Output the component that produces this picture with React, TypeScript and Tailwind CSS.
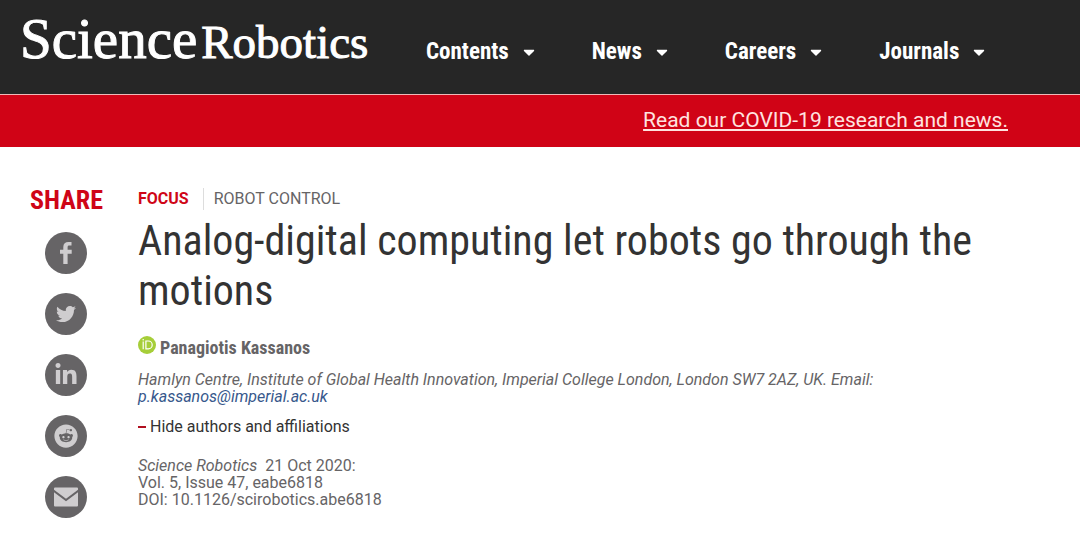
import type { ReactNode } from "react";
import { FaCaretDown, FaLinkedinIn, FaReddit, FaTwitter } from "react-icons/fa";

const menus = ["Contents", "News", "Careers", "Journals"];

function FacebookIcon() {
  return (
    <svg viewBox="0 0 24 24" className="size-6" fill="currentColor" aria-hidden="true">
      <path d="M17.5 1v3.6h-2.1c-1.4 0-1.8.6-1.8 1.7v2.4h4.1v4h-4.1V23H9.3V12.7H6v-4h3.3V5.9C9.300 2.700 11.300 1 14.400 1z" />
    </svg>
  );
}

function EnvelopeIcon() {
  return (
    <svg viewBox="0 0 24 24" className="size-6" fill="currentColor" aria-hidden="true">
      <path d="M1 2.500h22a1 1 0 0 1 1 1v1.300L12 13.700 0 4.800V3.500a1 1 0 0 1 1-1z" />
      <path d="M0 7.300l12 8.900 12-8.900V20.500a1 1 0 0 1-1 1H1a1 1 0 0 1-1-1z" />
    </svg>
  );
}

const shares: { label: string; icon: ReactNode }[] = [
  { label: "Share on Facebook", icon: <FacebookIcon /> },
  { label: "Share on Twitter", icon: <FaTwitter className="size-5" /> },
  { label: "Share on LinkedIn", icon: <FaLinkedinIn className="size-6" /> },
  { label: "Share on Reddit", icon: <FaReddit className="size-6" /> },
  { label: "Share by email", icon: <EnvelopeIcon /> },
];

function SiteHeader() {
  return (
    <header className="flex h-[94px] items-start bg-[#262626] pl-5 text-white">
      <a
        href="#home"
        className="flex w-[406px] shrink-0 items-baseline gap-1 pt-[7px] font-['Liberation_Serif',serif] leading-[64px] whitespace-nowrap [-webkit-text-stroke:1px_white]"
      >
        <span className="text-[57px]">Science</span>
        <span className="text-[47px]">Robotics</span>
      </a>
      <nav className="flex gap-[54px] pt-9 font-['Roboto_Condensed','Liberation_Sans_Narrow',sans-serif] text-[23px] leading-8 font-bold">
        {menus.map((menu) => (
          <button key={menu} type="button" className="flex items-center gap-[11px]">
            {menu}
            <FaCaretDown className="h-[18px] w-[18px]" />
          </button>
        ))}
      </nav>
    </header>
  );
}

function ShareRail() {
  return (
    <aside className="flex w-[138px] shrink-0 flex-col">
      <h2 className="pl-[30px] font-['Roboto_Condensed','Liberation_Sans_Narrow',sans-serif] text-[26px] leading-8 font-bold text-[#cf0517]">
        SHARE
      </h2>
      <ul className="mt-4 flex flex-col gap-[19px] pl-[45px]">
        {shares.map(({ label, icon }) => (
          <li key={label}>
            <button
              type="button"
              aria-label={label}
              className="flex size-[42px] items-center justify-center rounded-full bg-[#666466] text-[#cfcdcf]"
            >
              {icon}
            </button>
          </li>
        ))}
      </ul>
    </aside>
  );
}

function OrcidIcon() {
  return (
    <svg viewBox="0 0 18 18" className="size-[18px]" aria-hidden="true">
      <circle cx="9" cy="9" r="9" fill="#a6ce39" />
      <circle cx="5.2" cy="3.8" r="0.8" fill="#fff" />
      <path d="M5.200 5.500v7.800M7.900 5h2.400a3.900 3.900 0 0 1 0 7.800H7.900z" fill="none" stroke="#fff" strokeWidth="1.2" />
    </svg>
  );
}

function Article() {
  return (
    <article className="min-w-0 flex-1 pr-14 text-[16px] leading-[17px] text-[#666466]">
      <div className="flex items-center pt-1 leading-[22px]">
        <a href="#focus" className="border-r border-[#dddddd] pr-[14px] font-bold text-[#cf0517]">
          FOCUS
        </a>
        <span className="pl-[10px]">ROBOT CONTROL</span>
      </div>
      <h1 className="mt-[6px] font-['Roboto_Condensed','Liberation_Sans_Narrow',sans-serif] text-[42px] leading-[50px] text-[#333333]">
        Analog-digital computing let robots go through the motions
      </h1>
      <div className="mt-5 flex items-start gap-1 font-['Roboto_Condensed','Liberation_Sans_Narrow',sans-serif] text-[18px] leading-6 font-bold">
        <OrcidIcon />
        Panagiotis Kassanos
      </div>
      <address className="mt-[11px] italic">
        Hamlyn Centre, Institute of Global Health Innovation, Imperial College London, London SW7 2AZ, UK. Email:
        <br />
        <a href="mailto:p.kassanos@imperial.ac.uk" className="text-[#37588c]">
          p.kassanos@imperial.ac.uk
        </a>
      </address>
      <button type="button" className="mt-3 flex items-center gap-1 leading-5 text-[#333333]">
        <span className="h-[2px] w-2 bg-[#b01020]" />
        Hide authors and affiliations
      </button>
      <p className="mt-5">
        <em className="mr-2">Science Robotics</em>21 Oct 2020:
        <br />
        Vol. 5, Issue 47, eabe6818
        <br />
        DOI: 10.1126/scirobotics.abe6818
      </p>
    </article>
  );
}

export default function App() {
  return (
    <div className="bg-white font-['Roboto',sans-serif]">
      <SiteHeader />
      <div className="flex h-[53px] items-center justify-end border-t border-[#f0b8b8] bg-[#d00316] pr-[72px] pb-[2px]">
        <a href="#covid" className="text-[21px] leading-6 text-[#ffe3e0] underline underline-offset-2">
          Read our COVID-19 research and news.
        </a>
      </div>
      <main className="flex pt-[37px]">
        <ShareRail />
        <Article />
      </main>
    </div>
  );
}
